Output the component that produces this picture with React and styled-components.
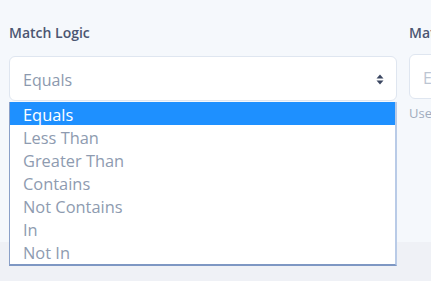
import React from 'react';
import styled, { createGlobalStyle } from 'styled-components';

const GlobalStyle = createGlobalStyle`
  html, body {
    margin: 0;
    padding: 0;
    background: #f5f8fc;
    font-family: "Open Sans", "Noto Sans", sans-serif;
  }
`;

const options = ['Equals', 'Less Than', 'Greater Than', 'Contains', 'Not Contains', 'In', 'Not In'];

const Page = styled.div`
  width: 431px;
  height: 281px;
  overflow: hidden;
  display: flex;
  flex-direction: column;
`;

const Main = styled.div`
  height: 242px;
  flex-shrink: 0;
  padding: 23px 0 0 9px;
  box-sizing: border-box;
`;

const Footer = styled.div`
  flex: 1;
  background: #eff1f6;
`;

const Row = styled.div`
  display: grid;
  grid-template-columns: 388px 200px;
  gap: 12px;
`;

const Field = styled.div`
  position: relative;
  display: flex;
  flex-direction: column;
`;

const Label = styled.label`
  font-size: 14px;
  font-weight: 600;
  line-height: 20px;
  color: #4b5671;
  margin-bottom: ${p => p.$gap}px;
  white-space: nowrap;
`;

const SelectBox = styled.div`
  height: 45px;
  box-sizing: border-box;
  background: #fff;
  border: 1px solid #dfe6f0;
  border-radius: 6px;
  display: flex;
  align-items: center;
  justify-content: space-between;
  padding: 2px 12px 0 13px;
  font-size: 16px;
  color: #8c99ae;
`;

const Input = styled.div`
  height: 45px;
  box-sizing: border-box;
  background: #fff;
  border: 1px solid #dfe6f0;
  border-radius: 6px;
  display: flex;
  align-items: center;
  padding: 2px 13px 0;
  font-size: 16px;
  color: #bcc5d2;
  white-space: nowrap;
`;

const Help = styled.div`
  margin-top: 5px;
  font-size: 13px;
  color: #a1acbe;
  white-space: nowrap;
`;

const Menu = styled.ul`
  position: absolute;
  top: 79px;
  left: 0;
  width: 388px;
  box-sizing: border-box;
  margin: 0;
  padding: 0 0 1px;
  list-style: none;
  background: #fff;
  border-left: 1px solid #8aa0c8;
  border-right: 2px solid #b9cbe7;
  border-bottom: 2px solid #7e97c3;
`;

const Item = styled.li`
  height: 23px;
  box-sizing: border-box;
  padding: 2px 0 0 13px;
  line-height: 22px;
  font-size: 16.4px;
  color: ${p => (p.$active ? '#ffffff' : '#8e9bb0')};
  background: ${p => (p.$active ? '#1e90ff' : 'transparent')};
  overflow: visible;
`;

const Arrows = () => (
  <svg width="8" height="11" viewBox="0 0 8 11">
    <path d="M4 0.5 L7.5 4.5 L0.5 4.5 Z" fill="#3b4661" />
    <path d="M4 10.5 L7.5 6.5 L0.5 6.5 Z" fill="#3b4661" />
  </svg>
);

export default function App() {
  return (
    <Page>
      <GlobalStyle />
      <Main>
        <Row>
          <Field>
            <Label $gap={13}>Match Logic</Label>
            <SelectBox>
              <span>Equals</span>
              <Arrows />
            </SelectBox>
            <Menu>
              {options.map((o, i) => (
                <Item key={o} $active={i === 0}>{o}</Item>
              ))}
            </Menu>
          </Field>
          <Field>
            <Label $gap={11}>Match Value</Label>
            <Input>Enter value</Input>
            <Help>Use commas to separate values</Help>
          </Field>
        </Row>
      </Main>
      <Footer />
    </Page>
  );
}
